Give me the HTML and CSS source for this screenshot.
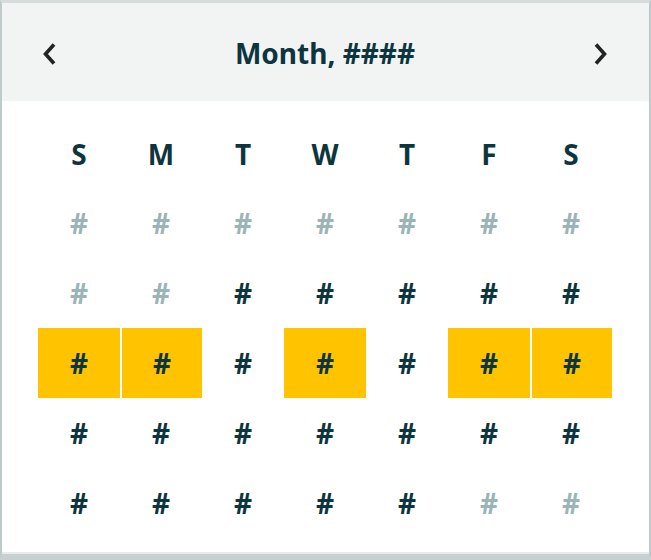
FILE: index.html
```html
<!DOCTYPE html>
<html>
<head>
<meta charset="utf-8">
<link rel="stylesheet" href="styles.css">
</head>
<body>
<div class="frame">
  <div class="calendar">
    <div class="cal-header">
      <button class="nav" aria-label="Previous month">
        <svg width="16" height="24" viewBox="0 0 16 24"><path d="M13 2.5 L4.5 12 L13 21.5" fill="none" stroke="#232323" stroke-width="3.6" stroke-linecap="butt" stroke-linejoin="miter"/></svg>
      </button>
      <div class="title">Month, ####</div>
      <button class="nav" aria-label="Next month">
        <svg width="16" height="24" viewBox="0 0 16 24"><path d="M3 2.5 L11.5 12 L3 21.5" fill="none" stroke="#232323" stroke-width="3.6" stroke-linecap="butt" stroke-linejoin="miter"/></svg>
      </button>
    </div>
    <div class="grid">
      <div class="wd">S</div><div class="wd">M</div><div class="wd">T</div><div class="wd">W</div><div class="wd">T</div><div class="wd">F</div><div class="wd">S</div>

      <div class="day muted">#</div><div class="day muted">#</div><div class="day muted">#</div><div class="day muted">#</div><div class="day muted">#</div><div class="day muted">#</div><div class="day muted">#</div>

      <div class="day muted">#</div><div class="day muted">#</div><div class="day">#</div><div class="day">#</div><div class="day">#</div><div class="day">#</div><div class="day">#</div>

      <div class="day sel">#</div><div class="day sel">#</div><div class="day">#</div><div class="day sel">#</div><div class="day">#</div><div class="day sel">#</div><div class="day sel">#</div>

      <div class="day">#</div><div class="day">#</div><div class="day">#</div><div class="day">#</div><div class="day">#</div><div class="day">#</div><div class="day">#</div>

      <div class="day">#</div><div class="day">#</div><div class="day">#</div><div class="day">#</div><div class="day">#</div><div class="day muted">#</div><div class="day muted">#</div>
    </div>
  </div>
</div>
</body>
</html>
```
FILE: styles.css
```css
html, body {
  margin: 0;
  padding: 0;
  background: #ffffff;
}

.frame {
  box-sizing: border-box;
  width: 651px;
  height: 560px;
  border-top: 3px solid #d6dcdc;
  border-left: 2px solid #bfcbcb;
  border-right: 2px solid #bfcbcb;
  border-bottom: 6px solid #c6d0d0;
  font-family: "Noto Sans", "Open Sans", sans-serif;
  font-weight: 700;
  color: #0d3540;
}

.calendar {
  box-sizing: border-box;
  height: 551px;
  border-bottom: 2px solid #e8ebeb;
  background: #ffffff;
}

.cal-header {
  height: 98px;
  background: #f2f4f4;
  display: flex;
  align-items: center;
  justify-content: space-between;
  padding: 0 40px 0 39px;
}

.nav {
  border: 0;
  background: none;
  padding: 0;
  width: 16px;
  height: 24px;
  display: flex;
  align-items: center;
  justify-content: center;
  margin-top: 4px;
}

.title {
  font-size: 28px;
  line-height: 1;
  padding-top: 2px;
}

.grid {
  display: grid;
  grid-template-columns: repeat(7, 82px);
  grid-template-rows: 70px repeat(5, 70px);
  margin-left: 36px;
  padding-top: 17px;
}

.wd, .day {
  display: flex;
  align-items: center;
  justify-content: center;
  font-size: 28px;
  line-height: 1;
}

.wd {
  padding-top: 2px;
}

.day.muted {
  color: #9ab4b7;
}

.day.sel {
  background: #ffc300;
}

.day.sel + .day.sel {
  border-left: 2px solid #ffffff;
  padding-left: 0;
}
```
